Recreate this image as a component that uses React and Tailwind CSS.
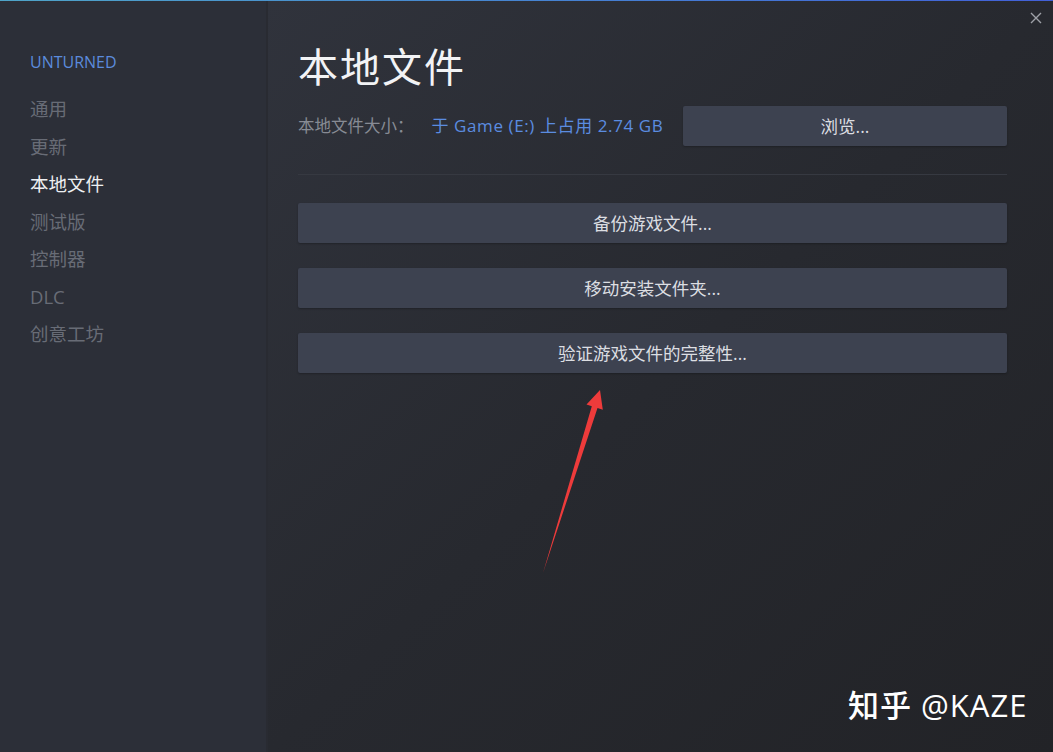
import React from 'react';

const FONT = { fontFamily: '"Open Sans", "Noto Sans CJK SC", sans-serif' };

const navItems = [
  { label: '通用' },
  { label: '更新' },
  { label: '本地文件', active: true },
  { label: '测试版' },
  { label: '控制器' },
  { label: 'DLC' },
  { label: '创意工坊' },
];

const actions = ['备份游戏文件...', '移动安装文件夹...', '验证游戏文件的完整性...'];

function Sidebar() {
  return (
    <div className="w-[268px] shrink-0 bg-[#2c2f38] border-r-2 border-[#292b32] pt-[49px] pl-[30px]">
      <div className="text-[16px] leading-[24px] text-[#5b8bdc]">UNTURNED</div>
      <div className="mt-[16px] flex flex-col">
        {navItems.map((item) => (
          <div
            key={item.label}
            className={
              'h-[37.5px] leading-[37.5px] text-[18.5px] ' +
              (item.active ? 'text-[#eef0f2]' : 'text-[#686c76]')
            }
          >
            {item.label}
          </div>
        ))}
      </div>
    </div>
  );
}

function Button({ children, className = '' }) {
  return (
    <button
      className={
        'h-[40px] rounded-[2px] bg-[#3d4250] text-[17.5px] text-[#dcdee2] shadow-[0_1px_2px_rgba(0,0,0,0.25)] ' +
        className
      }
    >
      {children}
    </button>
  );
}

function Arrow() {
  return (
    <svg className="absolute left-0 top-0 pointer-events-none" width="1053" height="752">
      <polygon
        points="543,573 591.8,406.3 586.5,404.6 600,390 602.8,409.8 597.5,408.1"
        fill="#ee3b3b"
      />
    </svg>
  );
}

export default function App() {
  return (
    <div className="relative w-[1053px] h-[752px] overflow-hidden flex flex-col bg-[#25272c]" style={FONT}>
      <div className="h-px shrink-0 bg-linear-to-r from-[#4fa4c8] to-[#4260d8]" />
      <div className="flex flex-1 min-h-0">
        <Sidebar />
        <main className="relative flex-1 bg-linear-to-br from-[#30333c] via-[#27292f] to-[#222327] pl-[30px] pr-[46px] pt-[40px]">
          <h1 className="text-[40px] leading-[52px] text-[#f2f3f5] tracking-[2px]">本地文件</h1>
          <div className="mt-[13px] flex items-center h-[40px]">
            <span className="text-[16.5px] text-[#878b94]">本地文件大小：</span>
            <span className="ml-[18px] text-[17px] tracking-[0.6px] text-[#5b8ce0]">于 Game (E:) 上占用 2.74 GB</span>
            <Button className="ml-auto w-[324px]">浏览...</Button>
          </div>
          <div className="mt-[28px] h-px bg-[#363941]" />
          <div className="mt-[28px] flex flex-col gap-[25px]">
            {actions.map((a) => (
              <Button key={a} className="w-full">{a}</Button>
            ))}
          </div>
          <div className="absolute right-[10px] top-[10px] w-[14px] h-[14px] text-[#9ea1a8]">
            <svg viewBox="0 0 14 14" width="14" height="14">
              <path d="M2 2 L12 12 M12 2 L2 12" stroke="currentColor" strokeWidth="1.4" />
            </svg>
          </div>
        </main>
      </div>
      <Arrow />
      <div className="absolute left-[848px] top-[684px] text-[31px] leading-[42px] tracking-[1px] text-white">
        <span className="font-medium">知乎</span> @KAZE
      </div>
    </div>
  );
}
